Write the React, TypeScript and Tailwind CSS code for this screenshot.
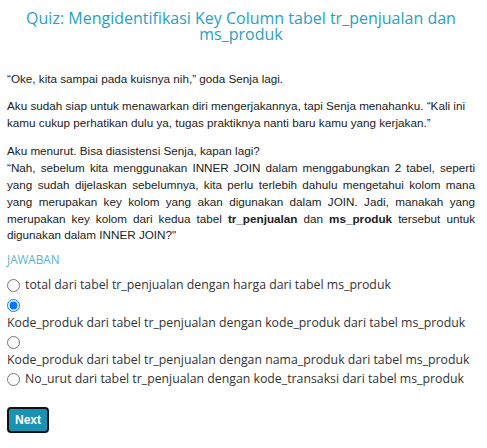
import React from "react"

const options = [
  { id: "a", label: "total dari tabel tr_penjualan dengan harga dari tabel ms_produk", wrap: false },
  { id: "b", label: "Kode_produk dari tabel tr_penjualan dengan kode_produk dari tabel ms_produk", wrap: true },
  { id: "c", label: "Kode_produk dari tabel tr_penjualan dengan nama_produk dari tabel ms_produk", wrap: true },
  { id: "d", label: "No_urut dari tabel tr_penjualan dengan kode_transaksi dari tabel ms_produk", wrap: false },
]

const App: React.FC = () => {
  return (
    <div className="w-[487px] h-[448px] bg-white pl-[7px] pr-[12px] pt-[10px]">
      <h1 className="text-center text-[16px] leading-[16px] text-[#2a9fbf] font-['Open_Sans',sans-serif]">
        Quiz: Mengidentifikasi Key Column tabel tr_penjualan dan ms_produk
      </h1>

      <div className="mt-[29px] text-[11.7px] leading-[16.8px] text-[#222] font-['Liberation_Sans',Arial,sans-serif]">
        <p className="mb-[10px]">“Oke, kita sampai pada kuisnya nih,” goda Senja lagi.</p>
        <p className="mb-[12px]">
          Aku sudah siap untuk menawarkan diri mengerjakannya, tapi Senja menahanku. “Kali ini kamu cukup
          perhatikan dulu ya, tugas praktiknya nanti baru kamu yang kerjakan.”
        </p>
        <p className="text-justify">
          Aku menurut. Bisa diasistensi Senja, kapan lagi?
          <br />
          “Nah, sebelum kita menggunakan INNER JOIN dalam menggabungkan 2 tabel, seperti yang sudah
          dijelaskan sebelumnya, kita perlu terlebih dahulu mengetahui kolom mana yang merupakan key kolom
          yang akan digunakan dalam JOIN. Jadi, manakah yang merupakan key kolom dari kedua tabel{" "}
          <b>tr_penjualan</b> dan <b>ms_produk</b> tersebut untuk digunakan dalam INNER JOIN?"
        </p>
      </div>

      <div className="mt-[7px] font-['Open_Sans',sans-serif] text-[12.3px] text-[#333]">
        <div className="text-[#5bb3c8] text-[11.7px] leading-[16px] uppercase">Jawaban</div>
        <div className="mt-[9px] flex flex-col gap-[2px]">
          {options.map((o) =>
            o.wrap ? (
              <label key={o.id} className="block leading-[18px]">
                <span className="flex h-[18px] items-center">
                  <input
                    type="radio"
                    name="jawaban"
                    defaultChecked={o.id === "b"}
                    className="m-0 h-[13px] w-[13px]"
                  />
                </span>
                <span className="block leading-[17px]">{o.label}</span>
              </label>
            ) : (
              <label key={o.id} className="flex items-center h-[18px] gap-[5px]">
                <input type="radio" name="jawaban" className="m-0 h-[13px] w-[13px]" />
                <span>{o.label}</span>
              </label>
            )
          )}
        </div>
      </div>

      <button className="mt-[19px] h-[26px] w-[42px] rounded-[4px] border-2 border-[#111] bg-[#1a93b3] text-[12px] font-bold text-white font-['Liberation_Sans',Arial,sans-serif]">
        Next
      </button>
    </div>
  )
}

export default App
